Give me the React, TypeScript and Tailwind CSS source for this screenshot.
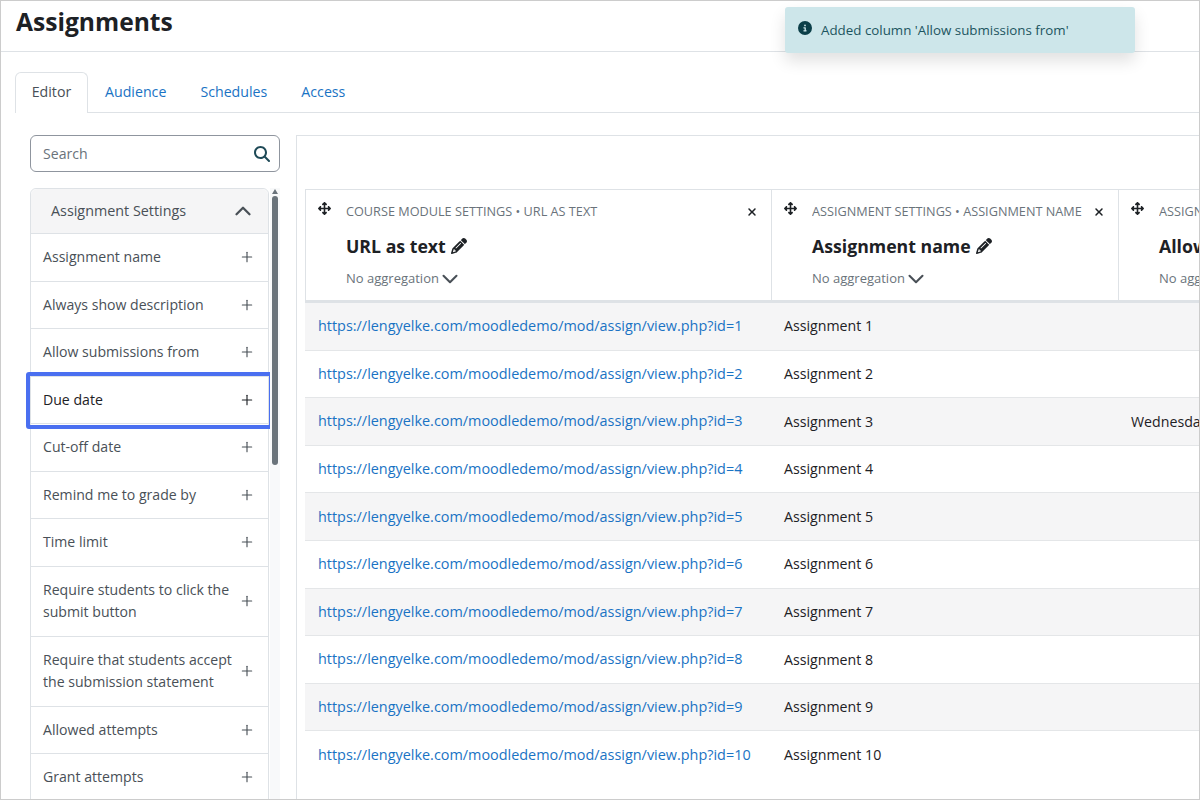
import { Plus, ChevronUp, ChevronDown } from 'lucide-react'
import { FaArrowsUpDownLeftRight, FaCircleInfo, FaMagnifyingGlass, FaPencil, FaXmark } from 'react-icons/fa6'

const font = "font-['Open_Sans','Noto_Sans',sans-serif]"

const fields = [
  { name: ['Assignment name'], h: 'h-[48px]' },
  { name: ['Always show description'], h: 'h-[47px]' },
  { name: ['Allow submissions from'], h: 'h-[48px]' },
  { name: ['Due date'], h: 'h-[47px]', focus: true },
  { name: ['Cut-off date'], h: 'h-[48px]' },
  { name: ['Remind me to grade by'], h: 'h-[47px]' },
  { name: ['Time limit'], h: 'h-[48px]' },
  { name: ['Require students to click the', 'submit button'], h: 'h-[70px]' },
  { name: ['Require that students accept', 'the submission statement'], h: 'h-[70px]' },
  { name: ['Allowed attempts'], h: 'h-[47px]' },
  { name: ['Grant attempts'], h: 'h-[48px]' },
]

const rows = [1, 2, 3, 4, 5, 6, 7, 8, 9, 10]

function ColumnHead({ crumb, title, width, close }: { crumb: string; title: string; width: string; close?: boolean }) {
  return (
    <div className={`${width} shrink-0 h-[110px] border-r border-[#dee2e6] pl-[12px] pt-[12px] flex`}>
      <div className="w-[28px] shrink-0">
        <FaArrowsUpDownLeftRight size={13} className="text-[#1d2125]" />
      </div>
      <div className="flex-1 min-w-0">
        <div className="flex items-center justify-between pr-[13px] h-[20px] text-[12.7px] text-[#6a737b] whitespace-nowrap overflow-hidden">
          <span>{crumb}</span>
          {close && <FaXmark size={12} className="text-[#1d2125] shrink-0" />}
        </div>
        <div className="mt-[11px] flex items-center gap-[5px] text-[17.7px] leading-[26px] font-bold text-[#1d2125] whitespace-nowrap">
          {title}
          <FaPencil size={16} className="text-[#1d2125] shrink-0" />
        </div>
        <div className="mt-[11px] h-[18px] flex items-center text-[13px] text-[#6a737b] whitespace-nowrap">
          No aggregation
          <ChevronDown size={26} strokeWidth={1.9} className="text-[#495057] shrink-0 -my-[4px] -ml-[2px]" />
        </div>
      </div>
    </div>
  )
}

export default function App() {
  return (
    <div className={`${font} relative w-[1200px] h-[800px] overflow-hidden bg-white border border-[#cccccc] text-[#1d2125] text-[14.1px]`}>
      <div className="h-[51px] border-b border-[#dee2e6] pl-[15px] pt-[3px]">
        <h1 className="text-[24.6px] leading-[36px] font-bold">Assignments</h1>
      </div>

      {/* toast */}
      <div className="absolute left-[784px] top-[6px] w-[350px] h-[46px] bg-[#cde6ea] rounded-[3px] shadow-[0_8px_16px_rgba(0,0,0,0.12)] flex items-center pl-[13px] gap-[9px] text-[#1c5560]">
        <FaCircleInfo size={14} className="text-[#0b3f49] -mt-[4px] shrink-0" />
        <span className="text-[13.35px] mt-[1px]">Added column 'Allow submissions from'</span>
      </div>

      <div className="mt-[20px] ml-[14px] h-[41px] border-b border-[#dee2e6] flex items-end text-[#1a73c4] text-[14.2px]">
        <div className="h-[41px] w-[73px] pb-[2px] border border-b-0 border-[#dee2e6] rounded-t-[6px] bg-white flex items-center justify-center text-[#495057] relative -mb-px">Editor</div>
        <div className="h-[41px] px-[17px] flex items-center">Audience</div>
        <div className="h-[41px] px-[17px] flex items-center">Schedules</div>
        <div className="h-[41px] px-[17px] flex items-center">Access</div>
      </div>

      <div className="flex pl-[29px] pt-[22px]">
        <div className="w-[250px] shrink-0 relative">
          <div className="h-[37px] w-[250px] border border-[#8f959e] rounded-[6px] flex items-center justify-between pl-[12px] pr-[9px] text-[#6a737b]">
            Search
            <FaMagnifyingGlass size={16} className="text-[#1f4a57]" />
          </div>
          <div className="flex mt-[16px]">
            <div className="w-[240px] border border-[#dee2e6] rounded-t-[6px] text-[#495057]">
              <div className="h-[45px] bg-[#f5f5f6] border-b border-[#dee2e6] rounded-t-[6px] flex items-center justify-between pl-[20px] pr-[12px] text-[14.35px]">
                Assignment Settings
                <ChevronUp size={26} strokeWidth={2.1} className="text-[#495057]" />
              </div>
              {fields.map((f) => (
                <div
                  key={f.name[0]}
                  className={`${f.h} relative flex items-center justify-between pl-[12px] pr-[13px] border-b border-[#dee2e6] leading-[22px] pb-[1px] ${f.focus ? 'text-[#1d2125]' : ''}`}
                >
                  <div>
                    {f.name.map((l) => (
                      <div key={l} className="whitespace-nowrap">{l}</div>
                    ))}
                  </div>
                  <Plus size={16} strokeWidth={1.7} className={f.focus ? 'text-[#1d2125]' : 'text-[#495057]'} />
                  {f.focus && <div className="absolute -left-[5px] -right-[5px] -top-[5px] -bottom-[6px] border-[4px] border-[#4a6ff0] rounded-[3px]" />}
                </div>
              ))}
            </div>
            <div className="w-[10px] ml-[1px] bg-[#f8f9fa] relative flex flex-col items-center">
              <div className="w-0 h-0 mt-[1px] border-x-[3px] border-x-transparent border-b-[5px] border-b-[#6a737b]" />
              <div className="w-[6px] h-[269px] mt-[2px] rounded-[3px] bg-[#6a737b]" />
            </div>
          </div>
        </div>

        <div className="ml-[16px] flex-1 min-w-0 border-l border-t border-[#dee2e6] pl-[8px] pt-[53px]">
          <div className="border-l border-t border-[#dee2e6] flex border-b-[3px] border-b-[#dee2e6]">
            <ColumnHead crumb="COURSE MODULE SETTINGS • URL AS TEXT" title="URL as text" width="w-[466px]" close />
            <ColumnHead crumb="ASSIGNMENT SETTINGS • ASSIGNMENT NAME" title="Assignment name" width="w-[347px]" close />
            <ColumnHead crumb="ASSIGNMENT SETTINGS • ALLOW SUBMISSIONS FROM" title="Allow submissions from" width="w-[300px]" />
          </div>
          {rows.map((n) => (
            <div
              key={n}
              className={`h-[47.6px] pb-[0.5px] flex items-center whitespace-nowrap ${n < 10 ? 'border-b border-[#e4e6e8]' : ''} ${n % 2 ? 'bg-[#f5f5f6]' : ''}`}
            >
              <a className="block shrink-0 w-[466px] pl-[13px] text-[#1a73c4] text-[14.42px]">https://lengyelke.com/moodledemo/mod/assign/view.php?id={n}</a>
              <div className="shrink-0 w-[347px] pl-[13px] text-[14.2px]">Assignment {n}</div>
              <div className="shrink-0 pl-[13px] text-[14.2px]">{n === 3 ? 'Wednesday, 1 May 2024, 12:00 AM' : ''}</div>
            </div>
          ))}
          <div className="pl-[16px] pt-[14px] text-[#8f959e]">Rows per page</div>
        </div>
      </div>
    </div>
  )
}
